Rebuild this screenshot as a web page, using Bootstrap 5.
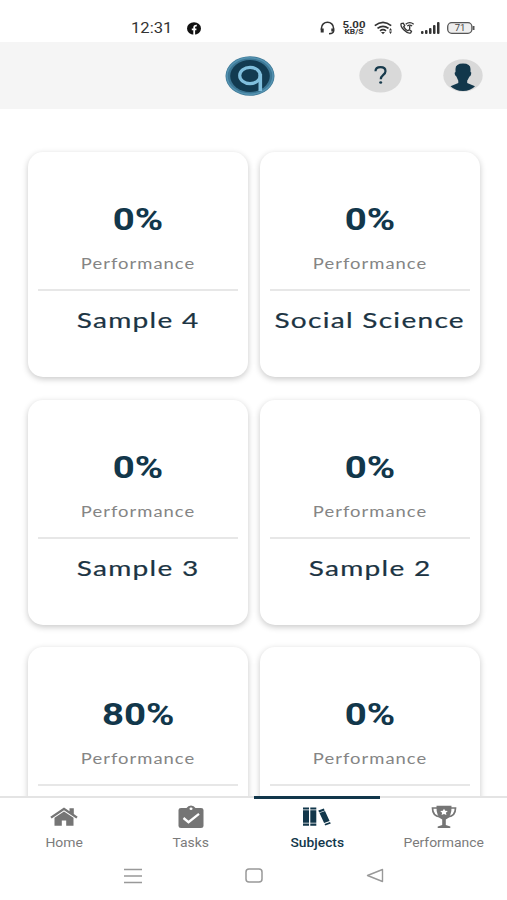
<!DOCTYPE html>
<html lang="en">
<head>
<meta charset="utf-8">
<meta name="viewport" content="width=device-width, initial-scale=1">
<title>Subjects</title>
<link href="https://cdn.jsdelivr.net/npm/bootstrap@5.3.0/dist/css/bootstrap.min.css" rel="stylesheet">
<style>
:root{--navy:#12374b;--grey:#7b7b7b}
body{font-family:Roboto,"Liberation Sans",sans-serif;background:#fff;color:var(--navy)}
svg{display:block;flex:none}
.screen{height:900px;width:507px}
.status{height:42px;padding:14px 32px 0 131px;color:#333}
.clock{width:41px;font-size:15.5px;line-height:20px}
.wide{display:inline-block;white-space:nowrap;transform:scaleX(1.2)}
.clock .wide{transform-origin:left;transform:scaleX(1.07)}
.rate{width:26px;margin:0 7px 0 6px;font-weight:700;font-size:9.5px;text-align:center}
.rate .wide{display:block;line-height:9px;height:9px}
.rate .unit{font-size:7px;line-height:7px;height:7px}
.topbar{height:67px;background:#f5f5f5;padding:0 24px 0 225px}
.grid{padding:43px 27px 0 28px;display:grid;grid-template-columns:220px 220px;column-gap:12px;row-gap:22.5px}
.subject{height:225px;border:0;border-radius:15px;box-shadow:0 2px 6px rgba(0,0,0,.22);padding:0 10px;text-align:center}
.score{margin-top:48px;height:38px;line-height:38px;font-size:32px;font-weight:700}
.caption{margin-top:16px;height:20px;line-height:20px;font-family:Lato,sans-serif;font-size:14.5px;letter-spacing:.8px;color:#858585}
.caption .wide{transform:scaleX(1.27)}
.rule{margin-top:15px;height:2px;background:#e7e7e7}
.title{margin-top:14px;height:30px;line-height:30px;font-family:Lato,sans-serif;font-size:22px;letter-spacing:1px;color:#1c3443;-webkit-text-stroke:.2px #1c3443}
.title .wide{transform:scaleX(1.275)}
.tabs{height:62px;border-top:2px solid #e4e4e4;background:#fff}
.tab{color:var(--grey);font-size:12px;line-height:16px;padding-top:6px;text-decoration:none}
.tab svg{height:28px;margin-left:1px}
.tab .wide{margin-top:3px;margin-left:1px;transform:scaleX(1.16)}
.tab.current{color:var(--navy);font-weight:500;box-shadow:0 -2px 0 var(--navy),inset 0 1px 0 var(--navy)}
.tab.current .wide{transform:scaleX(1.15)}
.system{height:42px;padding:0 123px 7px 124px;background:#fff}
</style>
</head>
<body>
<div class="screen d-flex flex-column overflow-hidden">
  <div class="status d-flex align-items-center flex-shrink-0">
    <div class="clock"><span class="wide">12:31</span></div>
    <svg style="margin-left:15px" width="14" height="13" viewBox="0 0 14 13"><ellipse cx="7" cy="6.5" rx="7" ry="6.2" fill="#111"/><path d="M7.2 13V5.3q0-2 2.6-1.6M4.8 7.3h4.6" fill="none" stroke="#fff" stroke-width="1.8"/></svg>
    <svg class="ms-auto" width="15" height="14" viewBox="0 0 15 14" fill="none" stroke="#333" stroke-width="1.5"><path d="M1.5 9V7a6 5.8 0 0 1 12 0v3q0 2.5-4.5 2.7"/><path d="M2.2 7.5v4M12.8 7.5v3" stroke-width="3"/></svg>
    <div class="rate"><span class="wide">5.00</span><span class="wide unit">KB/S</span></div>
    <svg width="20" height="14" viewBox="0 0 20 14" fill="none" stroke="#333" stroke-width="1.7"><path d="M.8 4.7q8.2-6.6 16.400 0M3.500 7.400q5.500-4.200 11 0M6 9.800q3-2.300 6 0"/><path d="M7 11h4l-2 2.300z" fill="#333" stroke="none"/><path d="M16.500 7l1.500 2.500h-3zM16.500 13l1.500-2.500h-3z" fill="#333" stroke="none"/></svg>
    <svg style="margin-left:5px" width="16" height="14" viewBox="0 0 16 14" fill="none" stroke="#333" stroke-width="1.300"><path d="M2.200 2.500Q1 5 5 9t6.800 2.800l.7-1.600-2.300-1.400-1.400 1Q6.500 8.500 4.700 5.800l1-1.200-1.400-2.400z"/><path d="M6.700 3.200q4-3.200 8 0M8.300 5q2.400-1.800 4.800 0M10.700 5v3.500"/></svg>
    <svg style="margin-left:6px" width="19" height="12" viewBox="0 0 19 12" fill="#333"><rect y="9" width="2.500" height="3" rx="1"/><rect x="4" y="8" width="2.500" height="4" rx="1"/><rect x="8" y="6" width="2.500" height="6" rx="1"/><rect x="12" y="3" width="2.500" height="9" rx="1"/><rect x="16" width="2.500" height="12" rx="1"/></svg>
    <svg style="margin-left:7px" width="28" height="12" viewBox="0 0 28 12"><rect x=".7" y=".7" width="24.200" height="10.600" rx="4" fill="#eee" stroke="#555" stroke-width="1.300"/><path d="M26.600 4v4" stroke="#555" stroke-width="1.800"/><text x="13" y="9.300" font-size="9.500" font-family="Roboto" text-anchor="middle" fill="#444">71</text></svg>
  </div>

  <header class="topbar d-flex align-items-center flex-shrink-0">
    <svg width="50" height="40" viewBox="0 0 50 40"><ellipse cx="25" cy="20" rx="24.500" ry="19.800" fill="#3c7795"/><ellipse cx="25" cy="20" rx="23" ry="18.200" fill="none" stroke="#5492b0" stroke-width="1.500"/><ellipse cx="25" cy="20" rx="19.800" ry="16" fill="#123b51"/><ellipse cx="25" cy="19.500" rx="10.300" ry="8.200" fill="none" stroke="#80bfdd" stroke-width="3.200"/><path d="M35.300 18v17" stroke="#80bfdd" stroke-width="3.600"/></svg>
    <svg class="ms-auto" width="43" height="35" viewBox="0 0 43 35"><ellipse cx="21.500" cy="17.500" rx="21.200" ry="17" fill="#d9d9d9"/><path d="M16.500 13.300q0-4.100 5-4.100t5 4c0 3.600-4.700 3.900-4.700 8" fill="none" stroke="#173a4c" stroke-width="2.200"/><ellipse cx="21.700" cy="24.500" rx="1.500" ry="1.300" fill="#173a4c"/></svg>
    <svg width="40" height="34" viewBox="0 0 40 34" style="margin-left:41px"><ellipse cx="20" cy="16.500" rx="19.700" ry="16.300" fill="#d9d9d9"/><path d="M12.500 10Q12.500 4.500 20 4.500t7.500 5.500v3q1.200 0 .6 2.200t-1.600 2.300l-2.300 4.200v2.300l7.800 3.200Q27.500 32 20 32T7.500 27.200l7.800-3.200v-2.300L13.400 17.500q-1-.3-1.600-2.300t.7-2.200z" fill="#12374b"/></svg>
  </header>

  <main class="flex-grow-1 overflow-hidden" style="min-height:0">
    <div class="grid">
      <div class="card subject"><div class="score"><span class="wide">0%</span></div><div class="caption"><span class="wide">Performance</span></div><div class="rule"></div><div class="title"><span class="wide">Sample 4</span></div></div>
      <div class="card subject"><div class="score"><span class="wide">0%</span></div><div class="caption"><span class="wide">Performance</span></div><div class="rule"></div><div class="title"><span class="wide">Social Science</span></div></div>
      <div class="card subject"><div class="score"><span class="wide">0%</span></div><div class="caption"><span class="wide">Performance</span></div><div class="rule"></div><div class="title"><span class="wide">Sample 3</span></div></div>
      <div class="card subject"><div class="score"><span class="wide">0%</span></div><div class="caption"><span class="wide">Performance</span></div><div class="rule"></div><div class="title"><span class="wide">Sample 2</span></div></div>
      <div class="card subject"><div class="score"><span class="wide">80%</span></div><div class="caption"><span class="wide">Performance</span></div><div class="rule"></div></div>
      <div class="card subject"><div class="score"><span class="wide">0%</span></div><div class="caption"><span class="wide">Performance</span></div><div class="rule"></div></div>
    </div>
  </main>

  <nav class="tabs row g-0 flex-shrink-0">
    <a class="tab col d-flex flex-column align-items-center"><svg width="28" viewBox="0 0 28 28" fill="#757575"><path d="M14 3.500.3 12.700l1.400 1.700L14 6.300l12.300 8.100 1.400-1.700-3.900-2.600V4.300h-4.300v3z"/><path d="M14 7.500 4.500 13.700v8.100h7.300V16.500h4.400v5.300h7.300v-8.100z"/></svg><span class="wide">Home</span></a>
    <a class="tab col d-flex flex-column align-items-center"><svg width="28" viewBox="0 0 28 28"><path d="M4 4h5.500Q11 1.500 14 1.500T18.500 4H24q2.500 0 2.500 2v16q0 2-2.500 2H4q-2.500 0-2.500-2V6q0-2 2.500-2z" fill="#757575"/><ellipse cx="14" cy="4.800" rx="1.500" ry="1.200" fill="#fff"/><path d="m6.500 14 5 4.200L22 9.800" fill="none" stroke="#fff" stroke-width="2.300"/></svg><span class="wide">Tasks</span></a>
    <a class="tab col current d-flex flex-column align-items-center"><svg width="28" viewBox="0 0 28 28" fill="#12374b"><path d="M0 3.500h6v2H0zM0 6.300h6V18.800H0zM0 19.500h6v2.200H0zM7.300 3.500h6v2h-6zM7.300 6.300h6v12.500h-6zM7.300 19.500h6v2.200h-6zM15.300 6.600l5.500-2 .9 1.800-5.500 2zM16.500 9.100l5.500-2 4.600 10-5.500 2zM21.500 19.900l5.500-2 .8 1.700-5.500 2z"/></svg><span class="wide">Subjects</span></a>
    <a class="tab col d-flex flex-column align-items-center"><svg width="28" viewBox="0 0 28 28"><path d="M7 4H2.500q0 8 7.500 9M21 4h4.500q0 8-7.500 9" fill="none" stroke="#757575" stroke-width="1.700"/><path d="M6.500 1.800h15Q22 13 15.800 15.500V21l4.500 1.500V24H7.700v-1.500l4.500-1.500v-5.500Q6 13 6.500 1.800z" fill="#757575"/><path d="m14 4.800 1.200 2 2.600.3-1.900 1.600.5 2.300L14 9.900 11.600 11l.5-2.300-1.900-1.600 2.600-.3z" fill="#fff"/></svg><span class="wide">Performance</span></a>
  </nav>
  <div class="system d-flex align-items-center justify-content-between flex-shrink-0">
    <svg width="18" height="16" viewBox="0 0 18 16" stroke="#999" stroke-width="1.500"><path d="M0 1.500h18M0 8h18M0 14.500h18"/></svg>
    <svg width="18" height="15" viewBox="0 0 18 15"><rect x="1" y="1" width="16" height="13" rx="3" fill="none" stroke="#999" stroke-width="1.500"/></svg>
    <svg width="18" height="15" viewBox="0 0 18 15"><path d="M16.500 1.500v12L1.500 7.500z" fill="none" stroke="#999" stroke-width="1.400" stroke-linejoin="round"/></svg>
  </div>
</div>
<script src="https://cdn.jsdelivr.net/npm/bootstrap@5.3.0/dist/js/bootstrap.bundle.min.js"></script>
</body>
</html>
